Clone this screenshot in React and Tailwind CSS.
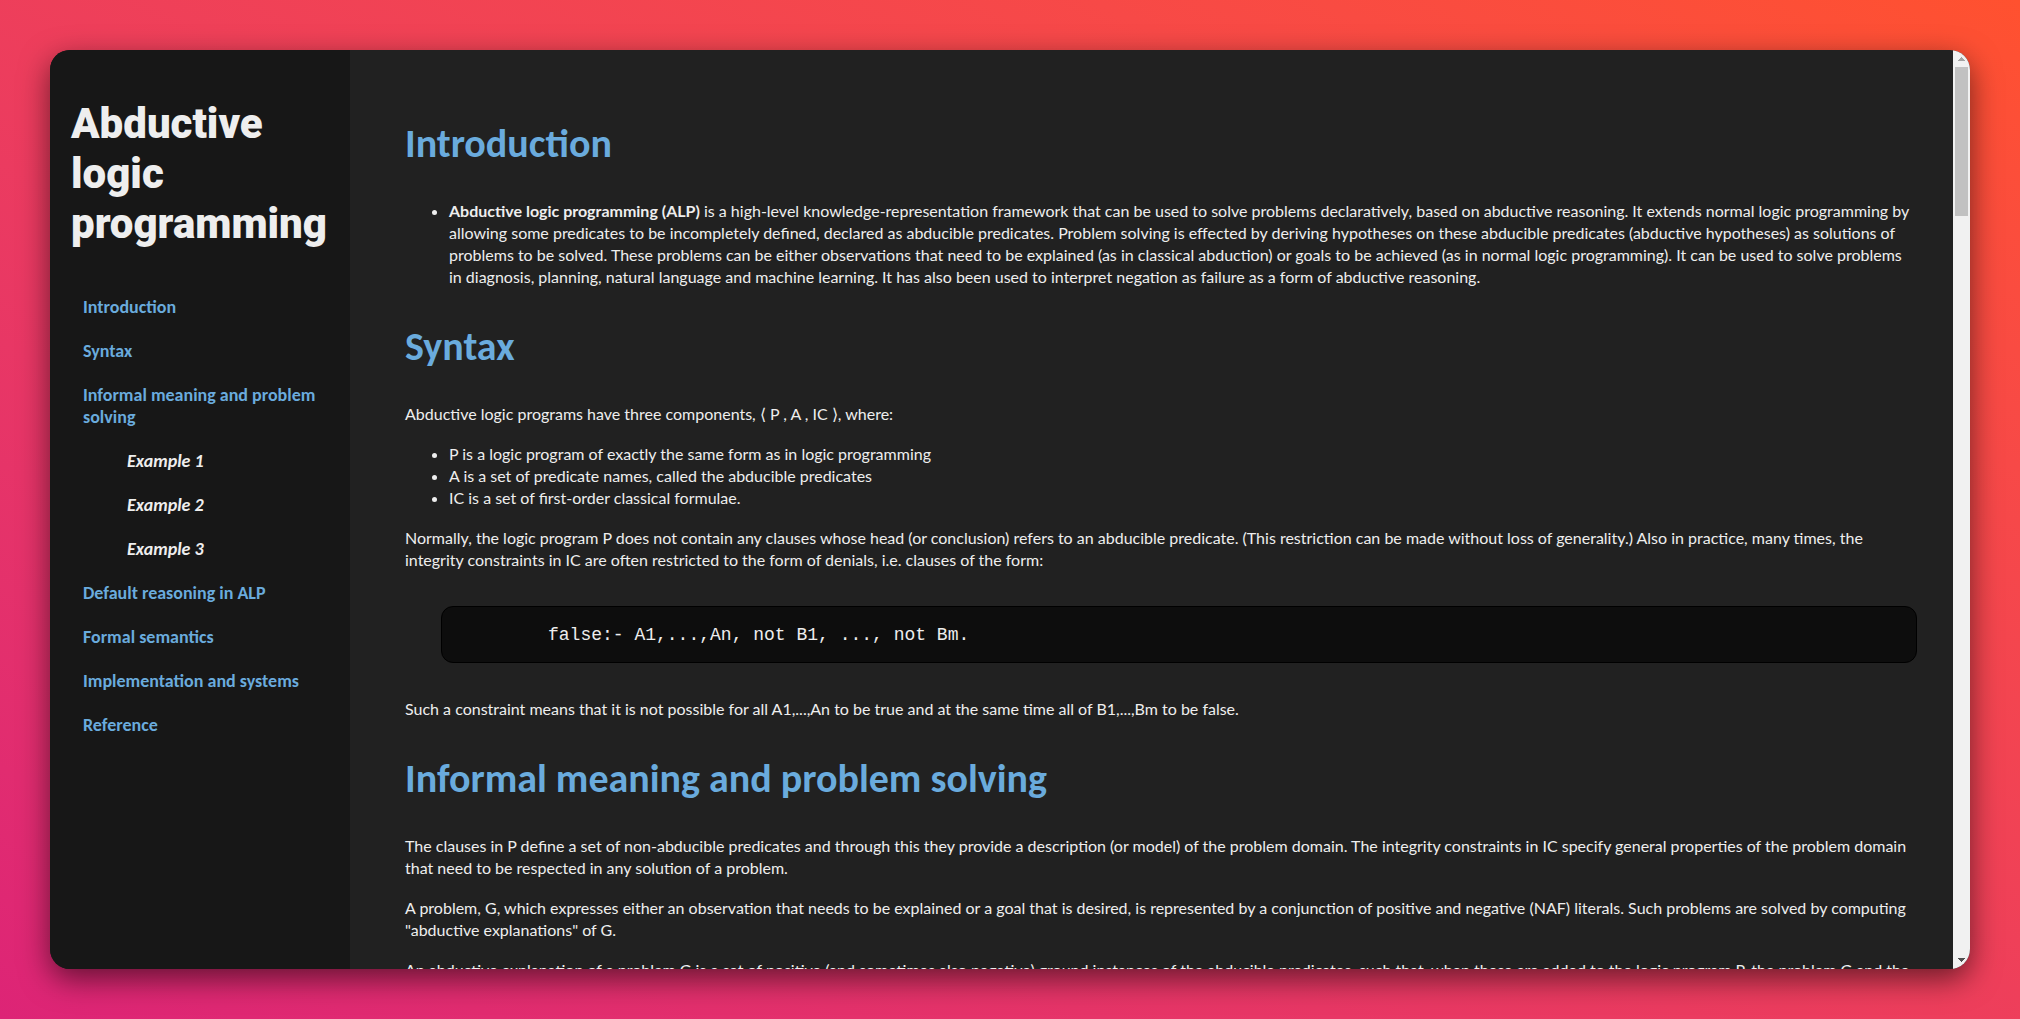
const nav = [
  { label: "Introduction", href: "#introduction" },
  { label: "Syntax", href: "#syntax" },
  { label: "Informal meaning and problem solving", href: "#informal" },
  { label: "Example 1", href: "#example-1", sub: true },
  { label: "Example 2", href: "#example-2", sub: true },
  { label: "Example 3", href: "#example-3", sub: true },
  { label: "Default reasoning in ALP", href: "#default" },
  { label: "Formal semantics", href: "#semantics" },
  { label: "Implementation and systems", href: "#systems" },
  { label: "Reference", href: "#reference" },
];

function Heading({ id, children }) {
  return (
    <h2
      id={id}
      className="pt-[35px] pb-[33px] font-[Calibri,Carlito,Lato,sans-serif] text-[40px] leading-[47px] font-bold text-[#6aabdd]"
    >
      {children}
    </h2>
  );
}

function ScrollBar() {
  return (
    <div aria-hidden="true" className="flex w-[17px] shrink-0 flex-col items-center bg-[#f1f1f1]">
      <svg className="size-[17px] shrink-0" viewBox="0 0 17 17" fill="#a3a3a3" shapeRendering="crispEdges">
        <path d="M5 11h7L8.500 7z" />
      </svg>
      <div className="h-[149px] w-[13px] bg-[#c1c1c1]" />
      <svg className="mt-auto size-[17px] shrink-0" viewBox="0 0 17 17" fill="#505050" shapeRendering="crispEdges">
        <path d="M5 6h7L8.500 10z" />
      </svg>
    </div>
  );
}

export default function App() {
  return (
    <div className="flex h-screen bg-linear-to-tr from-[#dd2476] to-[#ff512f] p-[50px] font-[Lato,sans-serif] text-[16px] leading-[22px] text-[#eeeeee]">
      <div className="flex min-w-0 flex-1 overflow-hidden rounded-[20px] bg-[#212121] shadow-[0_10px_30px_rgba(0,0,0,0.55)]">
        <aside className="w-[300px] shrink-0 bg-[#171717] px-[21px] pt-[49px]">
          <h1 className="font-[Roboto,sans-serif] text-[42px] leading-[50px] font-black">
            Abductive logic programming
          </h1>
          <nav className="mt-[47px] pl-3 font-[Calibri,Carlito,Lato,sans-serif] text-[18px] leading-[22px]">
            <ul className="flex flex-col gap-[22px] font-bold text-[#6aabdd]">
              {nav.map((item) => (
                <li key={item.href} className={item.sub ? "pl-11 text-[#eeeeee] italic" : ""}>
                  <a href={item.href}>{item.label}</a>
                </li>
              ))}
            </ul>
          </nav>
        </aside>
        <main className="min-w-0 flex-1 overflow-hidden pt-[35px] pr-9 pl-[55px]">
          <Heading id="introduction">Introduction</Heading>
          <ul className="list-disc pl-11">
            <li>
              <b>Abductive logic programming (ALP)</b> is a high-level knowledge-representation framework that can be used
              to solve problems declaratively, based on abductive reasoning. It extends normal logic programming by
              allowing some predicates to be incompletely defined, declared as abducible predicates. Problem solving is
              effected by deriving hypotheses on these abducible predicates (abductive hypotheses) as solutions of
              problems to be solved. These problems can be either observations that need to be explained (as in classical
              abduction) or goals to be achieved (as in normal logic programming). It can be used to solve problems in
              diagnosis, planning, natural language and machine learning. It has also been used to interpret negation as
              failure as a form of abductive reasoning.
            </li>
          </ul>
          <Heading id="syntax">Syntax</Heading>
          <p>Abductive logic programs have three components, ⟨ P , A , IC ⟩, where:</p>
          <ul className="my-[18px] list-disc pl-11">
            <li>P is a logic program of exactly the same form as in logic programming</li>
            <li>A is a set of predicate names, called the abducible predicates</li>
            <li>IC is a set of first-order classical formulae.</li>
          </ul>
          <p>
            Normally, the logic program P does not contain any clauses whose head (or conclusion) refers to an abducible
            predicate. (This restriction can be made without loss of generality.) Also in practice, many times, the
            integrity constraints in IC are often restricted to the form of denials, i.e. clauses of the form:
          </p>
          <pre className="my-[35px] ml-9 rounded-[12px] border border-black bg-[#0d0d0d] pt-[17px] pb-4 pl-[106px] font-['Liberation_Mono',monospace] text-[18px] leading-[22px]">
            false:- A1,...,An, not B1, ..., not Bm.
          </pre>
          <p>
            Such a constraint means that it is not possible for all A1,...,An to be true and at the same time all of
            B1,...,Bm to be false.
          </p>
          <Heading id="informal">Informal meaning and problem solving</Heading>
          <p>
            The clauses in P define a set of non-abducible predicates and through this they provide a description (or
            model) of the problem domain. The integrity constraints in IC specify general properties of the problem domain
            that need to be respected in any solution of a problem.
          </p>
          <p className="my-[18px]">
            A problem, G, which expresses either an observation that needs to be explained or a goal that is desired, is
            represented by a conjunction of positive and negative (NAF) literals. Such problems are solved by computing
            "abductive explanations" of G.
          </p>
          <p>
            An abductive explanation of a problem G is a set of positive (and sometimes also negative) ground instances of
            the abducible predicates, such that, when these are added to the logic program P, the problem G and the
            integrity constraints IC both hold.
          </p>
        </main>
        <ScrollBar />
      </div>
    </div>
  );
}
